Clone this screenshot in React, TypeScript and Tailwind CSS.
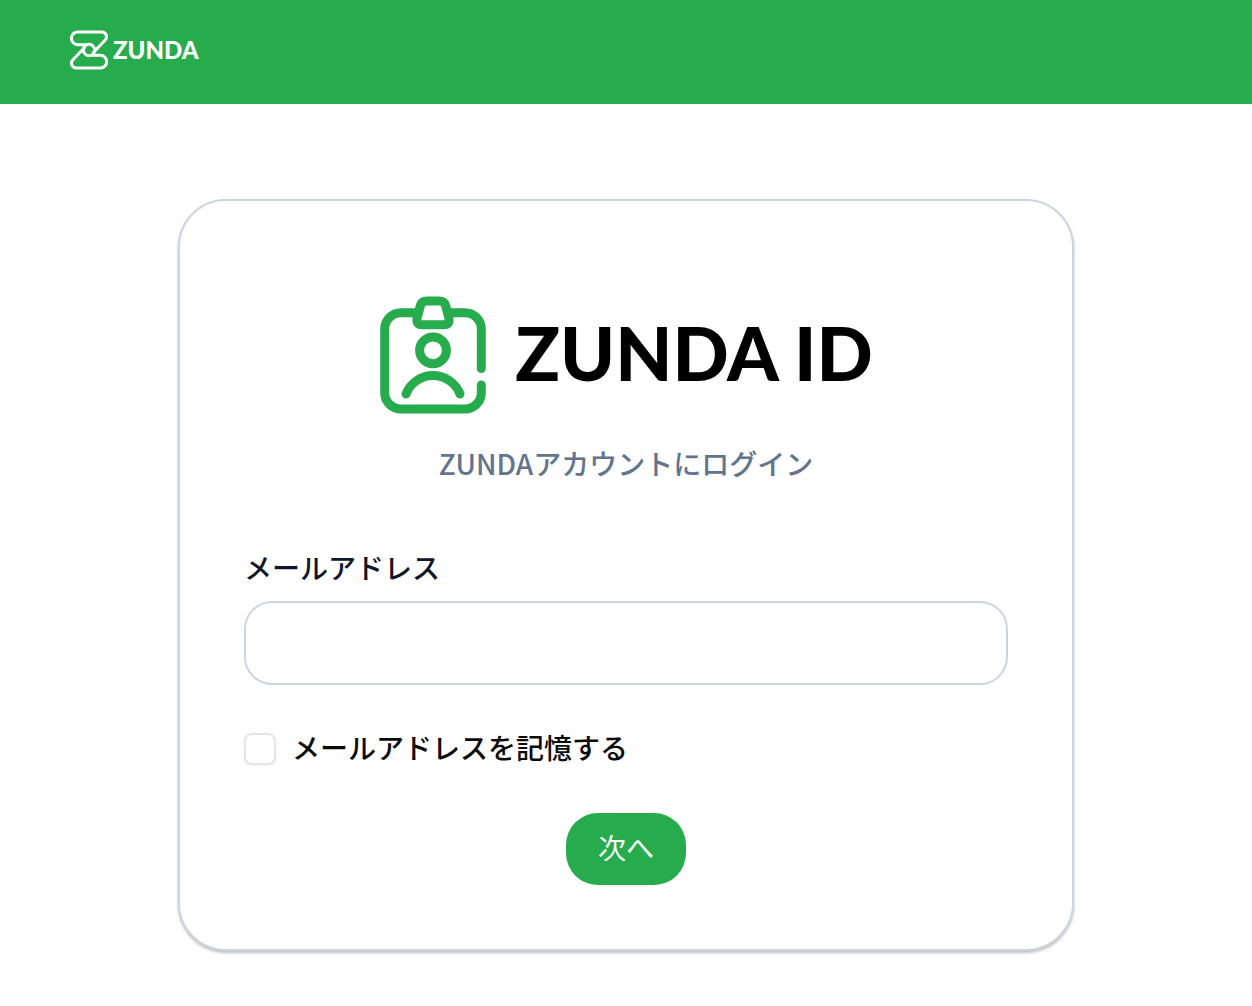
import React, { useState } from 'react';

const ZundaMark: React.FC<{ className?: string }> = ({ className }) => (
  <svg
    viewBox="0 0 114 120"
    className={className}
    fill="none"
    stroke="currentColor"
    strokeWidth="9"
    strokeLinecap="round"
    strokeLinejoin="round"
    aria-hidden="true"
  >
    <path d="M48 44 H23 A19 19 0 0 1 23 6 H94 C109 6 114 22 105 31 L71 67" />
    <path d="M66 76 H91 A19 19 0 0 1 91 114 H20 C5 114 0 98 9 89 L43 53" />
    <circle cx="57" cy="60" r="17" />
  </svg>
);

const IdBadgeIcon: React.FC<{ className?: string }> = ({ className }) => (
  <svg
    viewBox="0 0 108 120"
    className={className}
    fill="none"
    stroke="currentColor"
    strokeWidth="9"
    strokeLinecap="round"
    strokeLinejoin="round"
    aria-hidden="true"
  >
    <path d="M38 17.7 H22 A16.3 16.3 0 0 0 5.7 34 V97.7 A16.3 16.3 0 0 0 22 114 H86 A16.3 16.3 0 0 0 102.3 97.7 V90" />
    <path d="M70 17.7 H86 A16.3 16.3 0 0 1 102.3 34 V73.5" />
    <path d="M48 6 H60 Q65.4 6 66.6 10.5 L70 23.5 Q71 29.7 65 29.7 H43 Q37 29.7 38 23.5 L41.4 10.5 Q42.6 6 48 6 Z" />
    <circle cx="54" cy="55.3" r="13.4" />
    <path d="M27 99 A29 29 0 0 1 81 99" />
  </svg>
);

const Header: React.FC = () => (
  <header className="bg-[#27ac4d] h-26 px-[69px] flex items-center">
    <a href="#" className="flex items-center gap-1 pb-1 text-white">
      <ZundaMark className="w-10 h-10" />
      <span className="font-['Lato',sans-serif] text-2xl leading-10 font-black">ZUNDA</span>
    </a>
  </header>
);

const LoginForm: React.FC = () => {
  const [email, setEmail] = useState('');
  const [remember, setRemember] = useState(false);

  return (
    <form className="flex flex-col" onSubmit={(e) => e.preventDefault()}>
      <label htmlFor="email" className="text-[28px] leading-8 font-medium text-slate-900">
        メールアドレス
      </label>
      <input
        id="email"
        type="email"
        value={email}
        onChange={(e) => setEmail(e.target.value)}
        className="mt-[18px] h-21 w-full rounded-[28px] border-2 border-slate-300 bg-white px-6 text-[28px] outline-none"
      />
      <div className="mt-12 flex items-center gap-4">
        <input
          id="remember"
          type="checkbox"
          checked={remember}
          onChange={(e) => setRemember(e.target.checked)}
          className="h-8 w-8 appearance-none rounded-lg border-2 border-neutral-200 bg-white shadow-xs checked:bg-[#27ac4d]"
        />
        <label htmlFor="remember" className="pb-1 text-[28px] leading-7 font-medium text-neutral-950">
          メールアドレスを記憶する
        </label>
      </div>
      <button
        type="submit"
        className="mt-12 h-18 self-center rounded-4xl bg-[#27ac4d] px-8 pb-1 text-[28px] leading-8 text-white shadow-xs"
      >
        次へ
      </button>
    </form>
  );
};

const App: React.FC = () => {
  return (
    <div className="min-h-screen bg-white font-['Noto_Sans_CJK_JP',sans-serif]">
      <Header />
      <main className="px-6 pt-[95px] pb-12">
        <div className="mx-auto max-w-4xl rounded-[48px] border-2 border-slate-300 bg-white px-16 pt-[94px] pb-16 shadow-[0_2px_3px_rgba(0,0,0,0.25)]">
          <h1 className="flex items-start justify-center gap-7">
            <IdBadgeIcon className="w-27 h-30 text-[#27ac4d]" />
            <span className="font-['Lato',sans-serif] text-[74px] leading-29 font-black text-black">ZUNDA ID</span>
          </h1>
          <p className="mt-8 mb-18 text-center text-[28px] leading-8 font-medium text-slate-500">
            ZUNDAアカウントにログイン
          </p>
          <LoginForm />
        </div>
      </main>
    </div>
  );
};

export default App;
